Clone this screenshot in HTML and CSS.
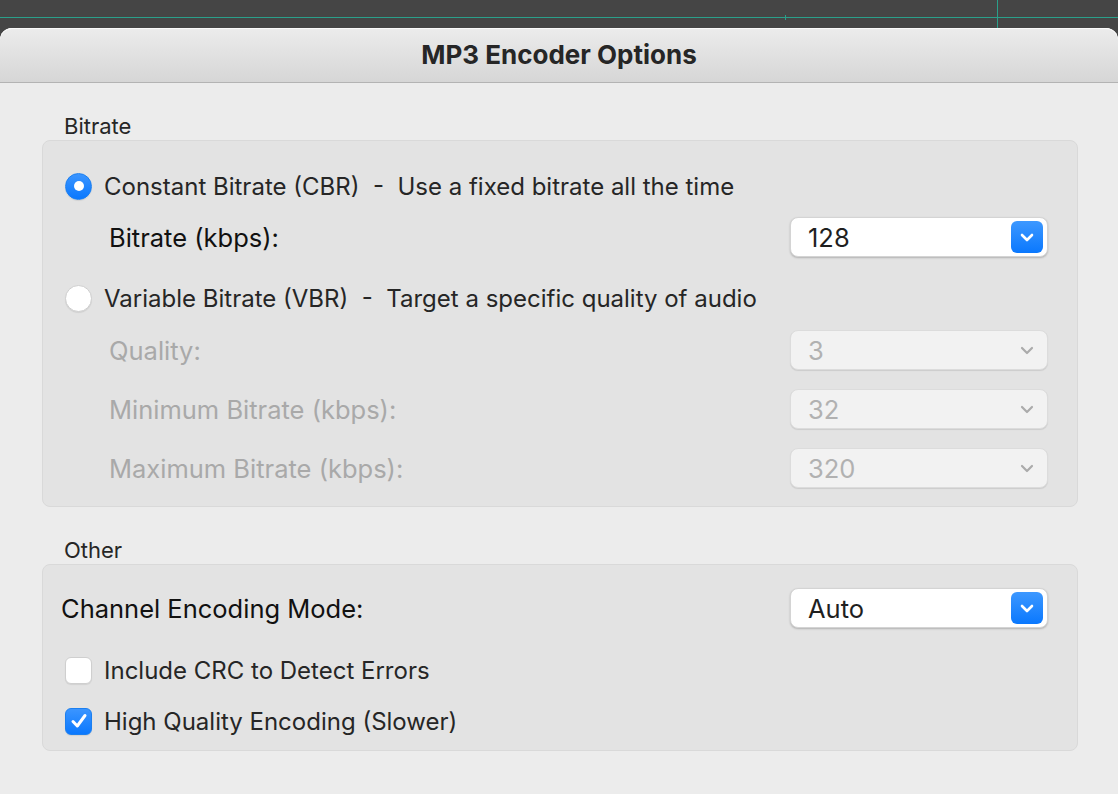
FILE: index.html
```html
<!DOCTYPE html>
<html>
	<head>
		<meta charset="UTF-8">
		<title>MP3 Encoder Options</title>
		<link rel="stylesheet" href="styles.css">
	</head>
	<body>
		<div class="track">
			<div class="wave"></div>
			<span class="tick tick-a"></span>
			<span class="tick tick-b"></span>
		</div>
		<div class="window">
			<div class="titlebar">MP3 Encoder Options</div>
			<div class="content">
				<div class="section-label">Bitrate</div>
				<div class="group group-bitrate">
					<div class="row row-cbr">
						<span class="radio checked"></span>
						<span class="text">Constant Bitrate (CBR)&nbsp; - &nbsp;Use a fixed bitrate all the time</span>
					</div>
					<div class="row row-field row-kbps">
						<span class="label">Bitrate (kbps):</span>
						<div class="select">
							<span class="value">128</span>
							<span class="btn"><svg width="14" height="9" viewBox="0 0 14 9"><path d="M2 2 L7 7 L12 2" fill="none" stroke="#fff" stroke-width="2.6" stroke-linecap="round" stroke-linejoin="round"/></svg></span>
						</div>
					</div>
					<div class="row row-vbr">
						<span class="radio"></span>
						<span class="text">Variable Bitrate (VBR)&nbsp; - &nbsp;Target a specific quality of audio</span>
					</div>
					<div class="row row-field row-quality disabled">
						<span class="label">Quality:</span>
						<div class="select off">
							<span class="value">3</span>
							<span class="chev"><svg width="14" height="9" viewBox="0 0 14 9"><path d="M2 2 L7 7 L12 2" fill="none" stroke="#ababab" stroke-width="2.2" stroke-linecap="round" stroke-linejoin="round"/></svg></span>
						</div>
					</div>
					<div class="row row-field row-min disabled">
						<span class="label">Minimum Bitrate (kbps):</span>
						<div class="select off">
							<span class="value">32</span>
							<span class="chev"><svg width="14" height="9" viewBox="0 0 14 9"><path d="M2 2 L7 7 L12 2" fill="none" stroke="#ababab" stroke-width="2.2" stroke-linecap="round" stroke-linejoin="round"/></svg></span>
						</div>
					</div>
					<div class="row row-field row-max disabled">
						<span class="label">Maximum Bitrate (kbps):</span>
						<div class="select off">
							<span class="value">320</span>
							<span class="chev"><svg width="14" height="9" viewBox="0 0 14 9"><path d="M2 2 L7 7 L12 2" fill="none" stroke="#ababab" stroke-width="2.2" stroke-linecap="round" stroke-linejoin="round"/></svg></span>
						</div>
					</div>
				</div>
				<div class="section-label second">Other</div>
				<div class="group group-other">
					<div class="row row-field row-channel">
						<span class="label">Channel Encoding Mode:</span>
						<div class="select">
							<span class="value">Auto</span>
							<span class="btn"><svg width="14" height="9" viewBox="0 0 14 9"><path d="M2 2 L7 7 L12 2" fill="none" stroke="#fff" stroke-width="2.6" stroke-linecap="round" stroke-linejoin="round"/></svg></span>
						</div>
					</div>
					<div class="row row-check row-crc">
						<span class="check"></span>
						<span class="text">Include CRC to Detect Errors</span>
					</div>
					<div class="row row-check row-hq">
						<span class="check checked"><svg width="20" height="18" viewBox="0 0 20 18"><path d="M4 9.5 L8.3 14 L16 3.5" fill="none" stroke="#fff" stroke-width="3" stroke-linecap="round" stroke-linejoin="round"/></svg></span>
						<span class="text">High Quality Encoding (Slower)</span>
					</div>
				</div>
			</div>
		</div>
	</body>
</html>
```

FILE: styles.css
```css
*{
	margin: 0;
	padding: 0;
	box-sizing: border-box;
}
html,body{
	height: 100%;
}
body{
	background: #454545;
	font-family: Inter, "Noto Sans", "Liberation Sans", sans-serif;
	color: #262626;
	overflow: hidden;
	display: flex;
	flex-direction: column;
}
.track{
	height: 28px;
	position: relative;
	flex: none;
}
.track .wave{
	position: absolute;
	left: 0;
	right: 0;
	top: 17px;
	height: 1px;
	background: #2a9f8a;
}
.track .tick{
	position: absolute;
	width: 1px;
	background: #2a9f8a;
}
.track .tick-a{
	left: 785px;
	top: 15px;
	height: 5px;
}
.track .tick-b{
	left: 997px;
	top: 0;
	height: 28px;
}
.window{
	flex: 1;
	background: #ececec;
	border-radius: 12px 12px 0 0;
	display: flex;
	flex-direction: column;
}
.titlebar{
	height: 55px;
	flex: none;
	border-radius: 12px 12px 0 0;
	background: linear-gradient(#ececec, #d6d6d6);
	border-bottom: 1px solid #b3b3b3;
	box-shadow: inset 0 1px 0 #fafafa;
	text-align: center;
	font-weight: 700;
	font-size: 26px;
	line-height: 54px;
	color: #262626;
}
.content{
	padding: 0 40px 0 42px;
}
.section-label{
	font-size: 22px;
	line-height: 24px;
	padding-left: 22px;
	margin-top: 31px;
	height: 26px;
	color: #262626;
}
.section-label.second{
	margin-top: 31px;
}
.group{
	background: #e3e3e3;
	border: 1px solid #d9d9d9;
	border-radius: 8px;
	padding: 0 29px 0 21px;
}
.row{
	display: flex;
	align-items: center;
	height: 40px;
}
.row .text{
	font-size: 24px;
	margin-left: 12px;
	color: #262626;
}
.row-field .label{
	flex: 1;
	font-size: 25.5px;
	color: #111;
	padding-left: 45px;
}
.row.disabled .label{
	color: #a9a9a9;
}
.group-bitrate{
	padding-top: 25px;
	padding-bottom: 18px;
}
.row-kbps{
	margin-top: 11px;
}
.row-vbr{
	margin-top: 21px;
}
.row-quality{
	margin-top: 12px;
}
.row-min,.row-max{
	margin-top: 19px;
}
.group-other{
	padding-top: 23px;
	padding-bottom: 9px;
}
.row-channel .label{
	padding-left: 0;
	margin-left: -3px;
}
.row-crc{
	margin-top: 22px;
}
.row-hq{
	margin-top: 11px;
}
.radio{
	width: 27px;
	height: 27px;
	border-radius: 50%;
	background: #fff;
	border: 1px solid #cfcfcf;
	box-shadow: 0 1px 1px rgba(0,0,0,.08);
	flex: none;
	display: flex;
	align-items: center;
	justify-content: center;
	margin-left: 1px;
}
.radio.checked{
	background: linear-gradient(#3b95ff, #0a78fe);
	border-color: #1b7ff0;
}
.radio.checked::after{
	content: "";
	width: 10px;
	height: 10px;
	border-radius: 50%;
	background: #fff;
}
.check{
	width: 27px;
	height: 27px;
	border-radius: 6px;
	background: #fff;
	border: 1px solid #cfcfcf;
	box-shadow: 0 1px 1px rgba(0,0,0,.08);
	flex: none;
	display: flex;
	align-items: center;
	justify-content: center;
	margin-left: 1px;
}
.check.checked{
	background: linear-gradient(#3b95ff, #0a78fe);
	border-color: #1b7ff0;
}
.select{
	width: 258px;
	height: 40px;
	background: #fff;
	border-radius: 8px;
	border: 1px solid #d4d4d4;
	box-shadow: 0 1px 2px rgba(0,0,0,.22);
	display: flex;
	align-items: center;
	padding: 0 4px 0 17px;
	flex: none;
}
.select .value{
	flex: 1;
	font-size: 25.5px;
	color: #1f1f1f;
}
.select .btn{
	width: 32px;
	height: 32px;
	border-radius: 6px;
	background: linear-gradient(#3d98ff, #0a78fe);
	display: flex;
	align-items: center;
	justify-content: center;
}
.select.off{
	background: #f2f2f2;
	border-color: #dcdcdc;
	box-shadow: 0 1px 1px rgba(0,0,0,.1);
}
.select.off .value{
	color: #b1b1b1;
}
.select .chev{
	width: 32px;
	height: 32px;
	display: flex;
	align-items: center;
	justify-content: center;
}
```
